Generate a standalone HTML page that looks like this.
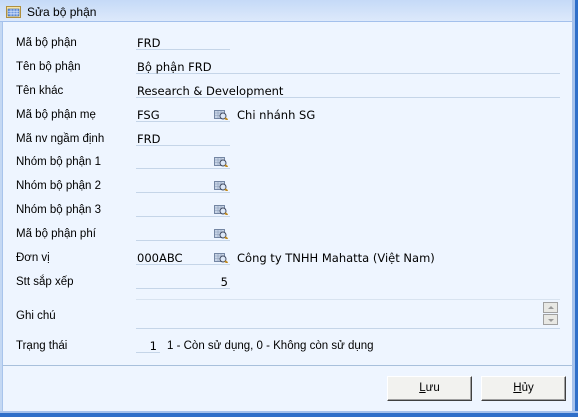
<!DOCTYPE html><html><head><meta charset="utf-8"><style>
*{margin:0;padding:0;box-sizing:border-box}
body{width:578px;height:417px;overflow:hidden;background:#eef5ff;position:relative;font-family:"DejaVu Sans",Verdana,sans-serif;font-size:11px;color:#000}
.a{position:absolute}
.tb{left:0;top:0;width:575px;height:22px;background:linear-gradient(#c5daf7,#dde9fb);border-bottom:1px solid #a3c0ec}
.lb{position:absolute;left:16px;font-family:"Liberation Sans",Arial,sans-serif;font-size:11.5px;line-height:14px}
.f{position:absolute;left:136px;height:16px;border-bottom:1px solid #c5d5e8;line-height:14px;padding-left:1px;padding-top:2px;font-size:11.5px}
.ic{position:absolute;width:14px;height:11px}
.ex{position:absolute;left:237px;font-size:11.5px;line-height:14px}
.btn{position:absolute;top:376px;width:85px;height:25px;background:#f2f2ef;border:1px solid;border-color:#fff #404040 #404040 #fff;box-shadow:inset -1px -1px 0 #a0a0a0;font-family:"Liberation Sans",Arial,sans-serif;font-size:11.5px;text-align:center;line-height:22px}
</style></head><body>
<div class="a tb"></div>
<svg class="a" style="left:6px;top:6px" width="15" height="12"><rect x="0.5" y="0.5" width="14" height="11" fill="#f7e6a6" stroke="#b09040"/><rect x="2" y="3" width="11" height="7" fill="#6f9ae0" stroke="#3a5fa8" stroke-width=".6"/><path d="M2 5.5h11M2 7.8h11M5 3v7M8 3v7M11 3v7" stroke="#e8f0ff" stroke-width=".6"/></svg>
<div class="a" style="left:27px;top:5px;font-family:'Liberation Sans',Arial,sans-serif;font-size:12px">Sửa bộ phận</div>
<div class="a" style="left:0;top:22px;width:3px;height:395px;background:#c4d8f3;border-right:1px solid #a8c4ec"></div>
<div class="a" style="left:572px;top:0;width:3px;height:417px;background:#a6c2ec"></div>
<div class="a" style="left:575px;top:0;width:3px;height:417px;background:#2f6fc9"></div>
<div class="a" style="left:0;top:411px;width:578px;height:2px;background:#a6c2ec"></div>
<div class="a" style="left:0;top:413px;width:578px;height:4px;background:#2f6fc9"></div>

<div class="lb" style="top:36px">Mã bộ phận</div><div class="f" style="top:34px;width:94px">FRD</div>
<div class="lb" style="top:60px">Tên bộ phận</div><div class="f" style="top:58px;width:424px">Bộ phận FRD</div>
<div class="lb" style="top:84px">Tên khác</div><div class="f" style="top:82px;width:424px">Research &amp; Development</div>
<div class="lb" style="top:108px">Mã bộ phận mẹ</div><div class="f" style="top:106px;width:94px">FSG</div><div class="ex" style="top:108px">Chi nhánh SG</div>
<div class="lb" style="top:132px">Mã nv ngầm định</div><div class="f" style="top:130px;width:94px">FRD</div>
<div class="lb" style="top:155px">Nhóm bộ phận 1</div><div class="f" style="top:153px;width:94px"></div>
<div class="lb" style="top:179px">Nhóm bộ phận 2</div><div class="f" style="top:177px;width:94px"></div>
<div class="lb" style="top:203px">Nhóm bộ phận 3</div><div class="f" style="top:201px;width:94px"></div>
<div class="lb" style="top:227px">Mã bộ phận phí</div><div class="f" style="top:225px;width:94px"></div>
<div class="lb" style="top:251px">Đơn vị</div><div class="f" style="top:249px;width:94px">000ABC</div><div class="ex" style="top:251px">Công ty TNHH Mahatta (Việt Nam)</div>
<div class="lb" style="top:275px">Stt sắp xếp</div><div class="f" style="top:273px;width:94px;text-align:right;padding-right:2px">5</div>
<div class="lb" style="top:309px">Ghi chú</div>
<div class="a" style="left:136px;top:299px;width:424px;height:30px;border-top:1px solid #d8e3f0;border-bottom:1px solid #c5d5e8"></div>
<div class="a" style="left:543px;top:302px;width:15px;height:11px;background:#e8e8e4;border:1px solid #a0a0a0"><div style="margin:3px auto 0;width:0;height:0;border:3px solid transparent;border-bottom-color:#999;border-top:0"></div></div>
<div class="a" style="left:543px;top:314px;width:15px;height:11px;background:#e8e8e4;border:1px solid #a0a0a0"><div style="margin:4px auto 0;width:0;height:0;border:3px solid transparent;border-top-color:#999;border-bottom:0"></div></div>
<div class="lb" style="top:339px">Trạng thái</div><div class="f" style="top:337px;width:24px;text-align:right;padding-right:3px">1</div>
<div class="a" style="left:167px;top:339px;font-family:'Liberation Sans',Arial,sans-serif;font-size:11.5px;line-height:14px">1 - Còn sử dụng, 0 - Không còn sử dụng</div>
<div class="a" style="left:3px;top:365px;width:569px;height:1px;background:#a8c0dc"></div>
<div class="btn" style="left:387px"><u>L</u>ưu</div>
<div class="btn" style="left:481px"><u>H</u>ủy</div>

<svg width="0" height="0" style="position:absolute"><defs><g id="lk"><rect x="0.5" y="1.5" width="10" height="8" fill="#c8d4e6" stroke="#5a6f90" stroke-width=".8"/><path d="M1 4h9M1 6.5h9M4 2v7M7 2v7" stroke="#8a9cb8" stroke-width=".6"/><circle cx="9" cy="7" r="3" fill="#dde8f8" stroke="#404a60"/><path d="M11 9l2.5 2" stroke="#c08a20" stroke-width="2"/></g></defs></svg>
<svg class="ic" style="left:214px;top:109px"><use href="#lk"/></svg>
<svg class="ic" style="left:214px;top:156px"><use href="#lk"/></svg>
<svg class="ic" style="left:214px;top:180px"><use href="#lk"/></svg>
<svg class="ic" style="left:214px;top:204px"><use href="#lk"/></svg>
<svg class="ic" style="left:214px;top:228px"><use href="#lk"/></svg>
<svg class="ic" style="left:214px;top:252px"><use href="#lk"/></svg>
</body></html>
